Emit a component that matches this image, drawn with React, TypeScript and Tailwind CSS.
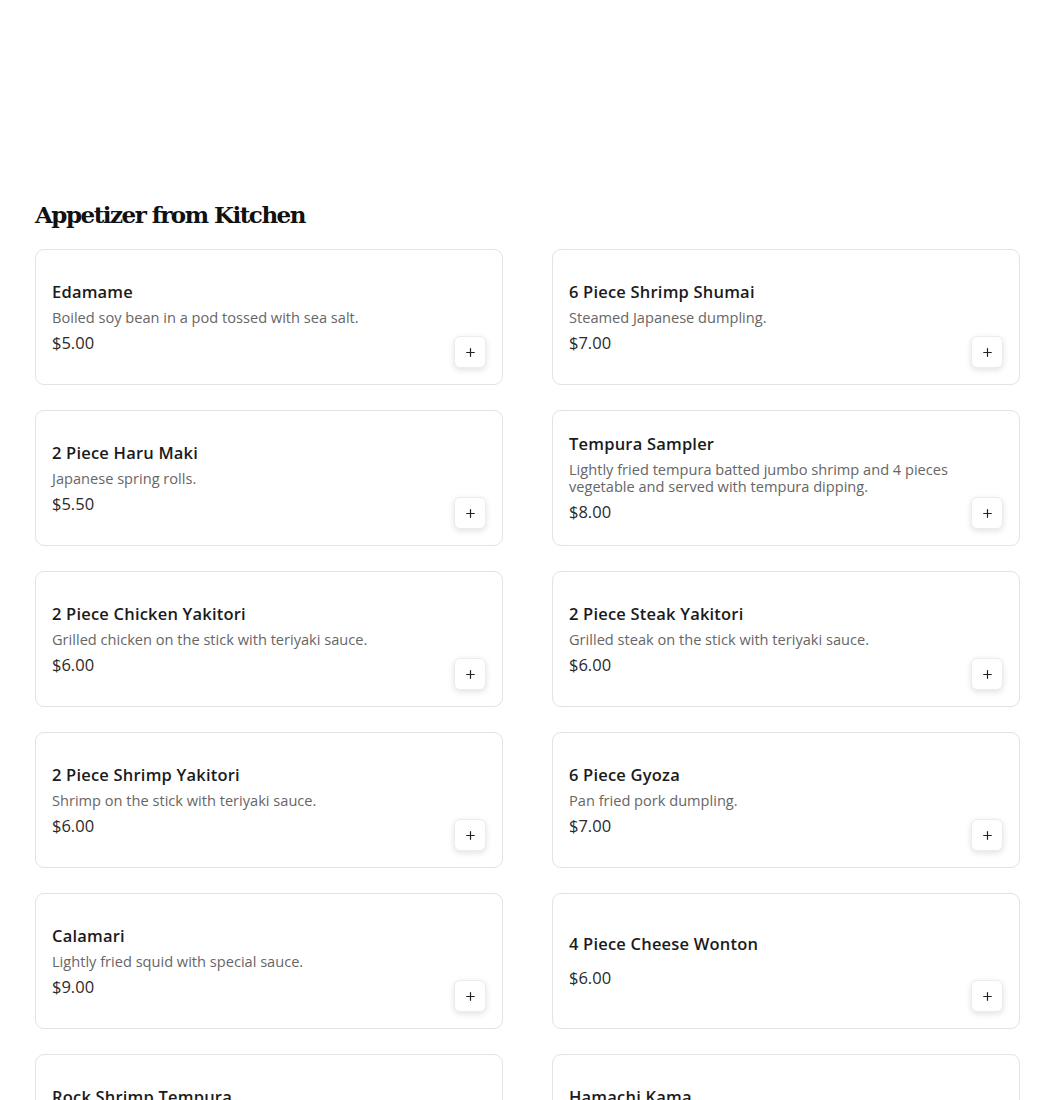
import { Plus } from 'lucide-react';

interface Item {
  name: string;
  desc?: string[];
  price: string;
}

const items: Item[] = [
  { name: 'Edamame', desc: ['Boiled soy bean in a pod tossed with sea salt.'], price: '$5.00' },
  { name: '6 Piece Shrimp Shumai', desc: ['Steamed Japanese dumpling.'], price: '$7.00' },
  { name: '2 Piece Haru Maki', desc: ['Japanese spring rolls.'], price: '$5.50' },
  {
    name: 'Tempura Sampler',
    desc: ['Lightly fried tempura batted jumbo shrimp and 4 pieces', 'vegetable and served with tempura dipping.'],
    price: '$8.00',
  },
  { name: '2 Piece Chicken Yakitori', desc: ['Grilled chicken on the stick with teriyaki sauce.'], price: '$6.00' },
  { name: '2 Piece Steak Yakitori', desc: ['Grilled steak on the stick with teriyaki sauce.'], price: '$6.00' },
  { name: '2 Piece Shrimp Yakitori', desc: ['Shrimp on the stick with teriyaki sauce.'], price: '$6.00' },
  { name: '6 Piece Gyoza', desc: ['Pan fried pork dumpling.'], price: '$7.00' },
  { name: 'Calamari', desc: ['Lightly fried squid with special sauce.'], price: '$9.00' },
  { name: '4 Piece Cheese Wonton', price: '$6.00' },
  { name: 'Rock Shrimp Tempura', desc: ['Lightly fried rock shrimp with spicy mayo.'], price: '$9.00' },
  { name: 'Hamachi Kama', desc: ['Grilled yellowtail collar.'], price: '$12.00' },
];

function MenuCard({ item }: { item: Item }) {
  return (
    <div className="h-[136px] bg-white border border-[#e3e3e3] rounded-[9px] p-4 flex">
      <div className="flex-1 flex flex-col justify-center min-w-0">
        <div className="text-[16.5px] leading-[20px] font-semibold tracking-[0.2px] text-[#1b1b1b]">{item.name}</div>
        <div className="mt-[7px] text-[14.6px] leading-[17px] text-[#666]">
          {item.desc?.map((line, i) => (
            <div key={i} className="whitespace-nowrap">{line}</div>
          ))}
        </div>
        <div className="mt-[7px] text-[16.5px] leading-[20px] text-[#2a2a2a]">{item.price}</div>
      </div>
      <div className="flex items-end">
        <button className="w-8 h-8 flex items-center justify-center bg-white rounded-md border border-[#ececec] shadow-[0_2px_6px_rgba(0,0,0,0.12)] text-[#222]">
          <Plus size={13} strokeWidth={2.2} />
        </button>
      </div>
    </div>
  );
}

export default function App() {
  return (
    <div className="bg-white min-h-[1100px] pt-[196px] pl-[35px] font-['Open_Sans',sans-serif]">
      <h2 className="text-[23px] leading-[38px] font-bold tracking-[-1.5px] text-[#111] font-['DejaVu_Serif',serif]">
        Appetizer from Kitchen
      </h2>
      <div className="mt-[15px] grid grid-cols-[468px_468px] gap-x-[49px] gap-y-[25px]">
        {items.map((item, i) => (
          <MenuCard key={i} item={item} />
        ))}
      </div>
    </div>
  );
}
